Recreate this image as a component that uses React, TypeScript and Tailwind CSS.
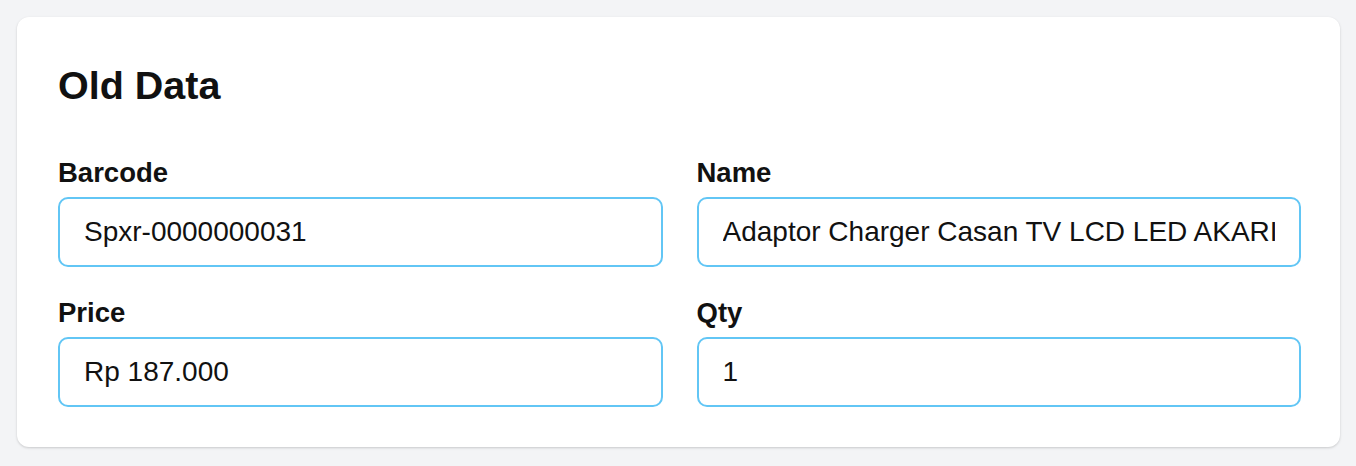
const fields = [
  { label: "Barcode", value: "Spxr-0000000031" },
  { label: "Name", value: "Adaptor Charger Casan TV LCD LED AKARI" },
  { label: "Price", value: "Rp 187.000" },
  { label: "Qty", value: "1" },
];

export default function App() {
  return (
    <div
      className="min-h-[466px] bg-[#f3f4f6] pl-[17px] pr-[16px] pt-[17px] pb-[19px]"
      style={{ fontFamily: '"Liberation Sans", Arial, sans-serif' }}
    >
      <div className="rounded-xl bg-white pl-[41px] pr-[39px] pt-[40px] pb-[40px] shadow-[0_1px_3px_rgba(0,0,0,0.12),0_1px_2px_rgba(0,0,0,0.06)]">
        <h2 className="mb-[44px] text-[39.5px] font-bold leading-[56px] text-[#111111]">Old Data</h2>

        {/* Fields */}
        <div className="grid grid-cols-2 gap-x-[34px] gap-y-[30px]">
          {fields.map((f) => (
            <div key={f.label} className="flex flex-col gap-[8px]">
              <label className="text-[27.5px] font-bold leading-[32px] text-[#111111]">{f.label}</label>
              <input
                readOnly
                value={f.value}
                className="h-[70px] w-full rounded-[10px] border-2 border-[#62c6f5] bg-white px-6 text-[28px] text-[#111111] outline-none"
                style={{ fontFamily: '"Liberation Sans", Arial, sans-serif' }}
              />
            </div>
          ))}
        </div>
      </div>
    </div>
  );
}
